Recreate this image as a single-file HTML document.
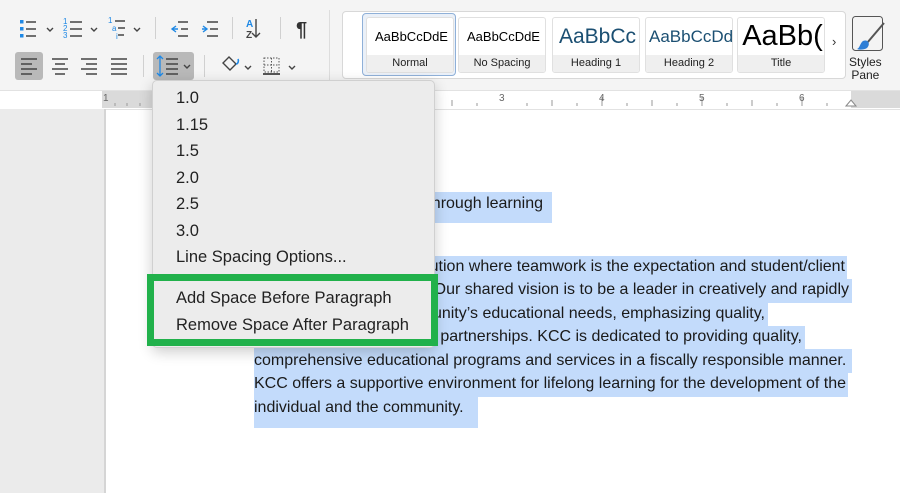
<!DOCTYPE html>
<html><head><style>
body{margin:0;width:900px;height:493px;overflow:hidden;font-family:"Liberation Sans",sans-serif;background:#fff;position:relative}
.a{position:absolute}
.tb{left:0;top:0;width:900px;height:90px;background:#f4f4f4}
.sel{background:#c3dbfb}
.doc{font-size:16px;color:#1a1a1a;white-space:nowrap;line-height:20px}
.r{text-align:right}
.mi{left:176px;font-size:16.5px;color:#222}
.sty{top:17px;width:86px;height:54px;background:#fff;border:1px solid #e0e0e0;border-radius:3px;overflow:hidden}
.sty .s{height:37px;text-align:center;white-space:nowrap;overflow:hidden;padding-left:3px}
.sty .n{height:17px;background:#efefef;font-size:11px;text-align:center;line-height:17px;color:#222}
</style></head><body>
<div class="a tb"></div>
<svg class="a" style="left:0;top:0" width="330" height="90">
<rect x="15" y="52" width="28" height="28" rx="3" fill="#b9b9b9"/>
<rect x="153" y="52" width="41" height="28" rx="3" fill="#b9b9b9"/>
<g fill="#1e88e5"><rect x="20" y="20" width="3.5" height="3.5"/><rect x="20" y="27" width="3.5" height="3.5"/><rect x="20" y="34" width="3.5" height="3.5"/></g>
<g stroke="#444" stroke-width="1.4" fill="none">
<path d="M26 22h10M26 29h10M26 36h10"/>
<path d="M70 22h12M70 29h12M70 36h12"/>
<path d="M115 21h10M118 28h7M118 35h6"/>
<path d="M178 22h10M181 29h7M178 36h10"/>
<path d="M207 22h11M210 29h8M207 36h11"/>
<path d="M47 28l3 3 3-3M91 28l3 3 3-3M134 28l3 3 3-3"/>
<path d="M21 59h16M21 64h11M21 69h16M21 74h11"/>
<path d="M52 59h16M55 64h10M52 69h16M55 74h10"/>
<path d="M81 59h16M86 64h11M81 69h16M86 74h11"/>
<path d="M111 59h16M111 64h16M111 69h16M111 74h16"/>
<path d="M166 59h12M166 64h12M166 69h12M166 74h12"/>
<path d="M184 65l3 3 3-3M245 66l3 3 3-3M289 66l3 3 3-3"/>
<path d="M223 63l6-6 7 7-6 6z"/>
</g>
<g font-size="8" fill="#1e88e5" font-family="Liberation Sans"><text x="63" y="24">1</text><text x="63" y="31">2</text><text x="63" y="38">3</text><text x="108" y="23">1</text><text x="112" y="31">a</text><text x="116" y="39">i</text></g>
<path d="M176 26l-4 3 4 3M203 26l4 3-4 3" stroke="#1e88e5" fill="none" stroke-width="1.4"/>
<path d="M172 29h6M202 29h5" stroke="#1e88e5" stroke-width="1.4"/>
<path d="M160 56v20M157 59l3-3 3 3M157 73l3 3 3-3" stroke="#1e88e5" fill="none" stroke-width="1.3"/>
<path d="M236 64c2 0 3-3 2-5" stroke="#1e88e5" fill="none" stroke-width="1.6"/>
<rect x="264" y="58" width="15" height="14" fill="none" stroke="#555" stroke-dasharray="1.5 1.5"/>
<path d="M271.5 58v14M264 65h15" stroke="#555" stroke-dasharray="1.5 1.5"/>
<path d="M263 74h17" stroke="#222" stroke-width="1.5"/>
<path d="M256 19v18M252 33l4 4 4-4" stroke="#444" fill="none" stroke-width="1.4"/>
<text x="246" y="27" font-size="10" font-weight="bold" fill="#1e88e5" font-family="Liberation Sans">A</text>
<text x="246" y="38" font-size="10" font-weight="bold" fill="#444" font-family="Liberation Sans">Z</text>
<text x="296" y="36" font-size="20" font-weight="bold" fill="#333" font-family="Liberation Sans">¶</text>
<g stroke="#d0d0d0"><path d="M155.5 17v22M232.5 17v22M280.5 17v22M143.5 55v22M204.5 55v22"/></g>
<path d="M329.5 10v70" stroke="#ddd"/>
</svg>
<!-- styles gallery -->
<div class="a" style="left:342px;top:11px;width:502px;height:66px;background:#fff;border:1px solid #d8d8d8;border-radius:4px"></div>
<div class="a" style="left:362px;top:13px;width:92px;height:61px;border:1px solid #8fb0d8;border-radius:4px;background:#eaf0f8"></div>
<div class="a sty" style="left:366px"><div class="s" style="font-size:13px;line-height:37px">AaBbCcDdE</div><div class="n">Normal</div></div>
<div class="a sty" style="left:458px"><div class="s" style="font-size:13px;line-height:37px">AaBbCcDdE</div><div class="n">No Spacing</div></div>
<div class="a sty" style="left:552px"><div class="s" style="font-size:21px;line-height:37px;color:#1b4f72">AaBbCc</div><div class="n">Heading 1</div></div>
<div class="a sty" style="left:645px"><div class="s" style="font-size:17px;line-height:37px;color:#1b4f72">AaBbCcDd</div><div class="n">Heading 2</div></div>
<div class="a sty" style="left:737px"><div class="s" style="font-size:29px;line-height:37px">AaBb(</div><div class="n">Title</div></div>
<div class="a" style="left:832px;top:34px;font-size:13px;color:#333">›</div>
<svg class="a" style="left:851px;top:15px" width="38" height="40"><rect x="1.5" y="1.5" width="30" height="34" rx="3" fill="none" stroke="#555"/><path d="M33 8L16 28" stroke="#555" stroke-width="2"/><path d="M12 26c5-2 8 3 4 7-3 2-8 2-10 1 3-1 3-6 6-8z" fill="#2f7fd6"/></svg>
<div class="a" style="left:849px;top:56px;font-size:12px;line-height:13px;text-align:center;color:#222">Styles<br>Pane</div>
<!-- ruler -->
<div class="a" style="left:0;top:90px;width:900px;height:18px;background:#fff;border-top:1px solid #e2e2e2;border-bottom:1px solid #e2e2e2"></div>
<div class="a" style="left:102px;top:91px;width:100px;height:17px;background:#dadada"></div>
<div class="a" style="left:851px;top:91px;width:49px;height:17px;background:#dadada"></div>
<svg class="a" style="left:0;top:91px" width="900" height="17">
<g stroke="#999" stroke-width="1"><path d="M427 12v3M452 12v3M477 12v3M527 12v3M552 12v3M577 12v3M627 12v3M652 12v3M677 12v3M727 12v3M752 12v3M777 12v3M827 12v3M115 12v3M127 12v3M140 12v3"/><path d="M452 9v6M552 9v6M652 9v6M752 9v6M602 6v9M702 6v9M802 6v9"/></g>
<g font-size="10" fill="#666"><text x="103" y="10">1</text><text x="499" y="10">3</text><text x="599" y="10">4</text><text x="699" y="10">5</text><text x="799" y="10">6</text></g>
<path d="M846 15l5-6 5 6z" fill="#fff" stroke="#888"/>
</svg>
<div class="a" style="left:0;top:109px;width:104px;height:384px;background:#ebebeb;border-right:2px solid #d5d5d5"></div>
<!-- selection & text -->
<div class="a sel" style="left:254px;top:192px;width:298px;height:31px"></div>
<div class="a doc r" style="right:357px;top:194px">Our mission is to educate through learning</div>
<div class="a sel" style="left:254px;top:256px;width:593px;height:24px"></div>
<div class="a sel" style="left:254px;top:279px;width:598px;height:24px"></div>
<div class="a sel" style="left:254px;top:302px;width:514px;height:24px"></div>
<div class="a sel" style="left:254px;top:326px;width:551px;height:24px"></div>
<div class="a sel" style="left:254px;top:349px;width:598px;height:24px"></div>
<div class="a sel" style="left:254px;top:373px;width:594px;height:24px"></div>
<div class="a sel" style="left:254px;top:396px;width:224px;height:32px"></div>
<div class="a doc r" style="right:55px;top:257px">KCC is an accessible institution where teamwork is the expectation and student/client</div>
<div class="a doc r" style="right:51px;top:280px">success is our priority. Our shared vision is to be a leader in creatively and rapidly</div>
<div class="a doc r" style="right:135px;top:304px">meeting the community’s educational needs, emphasizing quality,</div>
<div class="a doc r" style="right:98px;top:327px">innovation, and strong partnerships. KCC is dedicated to providing quality,</div>
<div class="a doc" style="left:254px;top:351px">comprehensive educational programs and services in a fiscally responsible manner.</div>
<div class="a doc" style="left:254px;top:374px">KCC offers a supportive environment for lifelong learning for the development of the</div>
<div class="a doc" style="left:254px;top:398px">individual and the community.</div>
<!-- menu -->
<div class="a" style="left:152px;top:80px;width:281px;height:266px;background:#ececec;border:1px solid #d0d0d0;border-radius:5px;box-shadow:0 4px 14px rgba(0,0,0,.2)"></div>
<div class="a mi" style="top:89px">1.0</div>
<div class="a mi" style="top:116px">1.15</div>
<div class="a mi" style="top:142px">1.5</div>
<div class="a mi" style="top:169px">2.0</div>
<div class="a mi" style="top:195px">2.5</div>
<div class="a mi" style="top:222px">3.0</div>
<div class="a mi" style="top:248px">Line Spacing Options...</div>
<div class="a mi" style="top:289px">Add Space Before Paragraph</div>
<div class="a mi" style="top:316px">Remove Space After Paragraph</div>
<div class="a" style="left:147px;top:274px;width:277px;height:58px;border:7px solid #21b14b"></div>
</body></html>
